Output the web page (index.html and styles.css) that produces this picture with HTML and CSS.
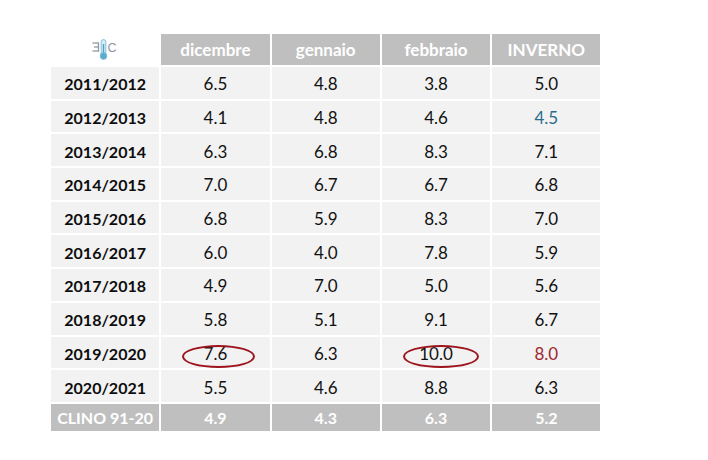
FILE: index.html
```html
<!DOCTYPE html>
<html lang="it">
<head>
<meta charset="utf-8">
<title>Temperature invernali</title>
<link rel="stylesheet" href="styles.css">
</head>
<body>
<div class="page">
  <div class="table">
    <div class="cell corner">
      <svg class="thermo" width="25" height="21" viewBox="0 0 25 21">
        <g stroke="#8f9aa3" stroke-width="1.3" fill="none">
          <line x1="0.5" y1="4" x2="6.5" y2="4"/>
          <line x1="2" y1="8" x2="6.5" y2="8"/>
          <line x1="0.5" y1="12" x2="6.5" y2="12"/>
          <line x1="6.5" y1="3.4" x2="6.5" y2="12.6"/>
        </g>
        <rect x="9.2" y="0.6" width="4.6" height="15" rx="2.3" fill="#d9edf6" stroke="#7fbfdc" stroke-width="1"/>
        <rect x="10.8" y="5" width="1.4" height="11" fill="#4f9fc6"/>
        <circle cx="11.5" cy="17" r="3.4" fill="#5aa9cf" stroke="#7fbfdc" stroke-width="0.8"/>
        <text x="15.6" y="13" class="thermo-c">C</text>
      </svg>
    </div>
    <div class="cell hd">dicembre</div>
    <div class="cell hd">gennaio</div>
    <div class="cell hd">febbraio</div>
    <div class="cell hd">INVERNO</div>

    <div class="cell yr">2011/2012</div><div class="cell">6.5</div><div class="cell">4.8</div><div class="cell">3.8</div><div class="cell">5.0</div>
    <div class="cell yr">2012/2013</div><div class="cell">4.1</div><div class="cell">4.8</div><div class="cell">4.6</div><div class="cell blue">4.5</div>
    <div class="cell yr">2013/2014</div><div class="cell">6.3</div><div class="cell">6.8</div><div class="cell">8.3</div><div class="cell">7.1</div>
    <div class="cell yr">2014/2015</div><div class="cell">7.0</div><div class="cell">6.7</div><div class="cell">6.7</div><div class="cell">6.8</div>
    <div class="cell yr">2015/2016</div><div class="cell">6.8</div><div class="cell">5.9</div><div class="cell">8.3</div><div class="cell">7.0</div>
    <div class="cell yr">2016/2017</div><div class="cell">6.0</div><div class="cell">4.0</div><div class="cell">7.8</div><div class="cell">5.9</div>
    <div class="cell yr">2017/2018</div><div class="cell">4.9</div><div class="cell">7.0</div><div class="cell">5.0</div><div class="cell">5.6</div>
    <div class="cell yr">2018/2019</div><div class="cell">5.8</div><div class="cell">5.1</div><div class="cell">9.1</div><div class="cell">6.7</div>
    <div class="cell yr">2019/2020</div><div class="cell marked"><span class="ring ring-a"></span>7.6</div><div class="cell">6.3</div><div class="cell marked"><span class="ring ring-b"></span>10.0</div><div class="cell red">8.0</div>
    <div class="cell yr">2020/2021</div><div class="cell">5.5</div><div class="cell">4.6</div><div class="cell">8.8</div><div class="cell">6.3</div>

    <div class="cell ft">CLINO 91-20</div><div class="cell ft">4.9</div><div class="cell ft">4.3</div><div class="cell ft">6.3</div><div class="cell ft">5.2</div>
  </div>
</div>
</body>
</html>
```

FILE: styles.css
```css
html, body {
  margin: 0;
  padding: 0;
  background: #ffffff;
}

.page {
  padding: 34px 0 0 51px;
  font-family: Lato, "Open Sans", sans-serif;
}

.table {
  display: grid;
  grid-template-columns: repeat(5, 108.3px);
  grid-template-rows: 31px repeat(10, 31.7px) 27px;
  gap: 2px;
  background: #ffffff;
}

.cell {
  display: flex;
  align-items: center;
  justify-content: center;
  background: #f2f2f2;
  color: #111111;
  font-size: 17px;
  padding-top: 2px;
  box-sizing: border-box;
}

.corner {
  background: #ffffff;
  padding-top: 0;
}

.thermo {
  display: block;
  margin-left: -2px;
}

.thermo-c {
  font-family: "Liberation Sans", sans-serif;
  font-size: 12.5px;
  fill: #8c969e;
}

.hd {
  background: #bfbfbf;
  color: #ffffff;
  font-weight: 700;
  font-size: 17px;
  padding-top: 0;
}

.yr {
  font-weight: 700;
  font-size: 16px;
  color: #0d0d0d;
}

.ft {
  background: #bfbfbf;
  color: #ffffff;
  font-weight: 700;
  font-size: 16px;
  padding-top: 0;
}

.blue {
  color: #2b6c8c;
}

.red {
  color: #a0272f;
}

.marked {
  position: relative;
}

.ring {
  position: absolute;
  top: 8.5px;
  height: 23px;
  border: 2.5px solid #9e141d;
  border-radius: 50%;
  box-sizing: border-box;
}

.ring-a {
  left: 21px;
  width: 73px;
}

.ring-b {
  left: 21px;
  width: 76px;
}
```
